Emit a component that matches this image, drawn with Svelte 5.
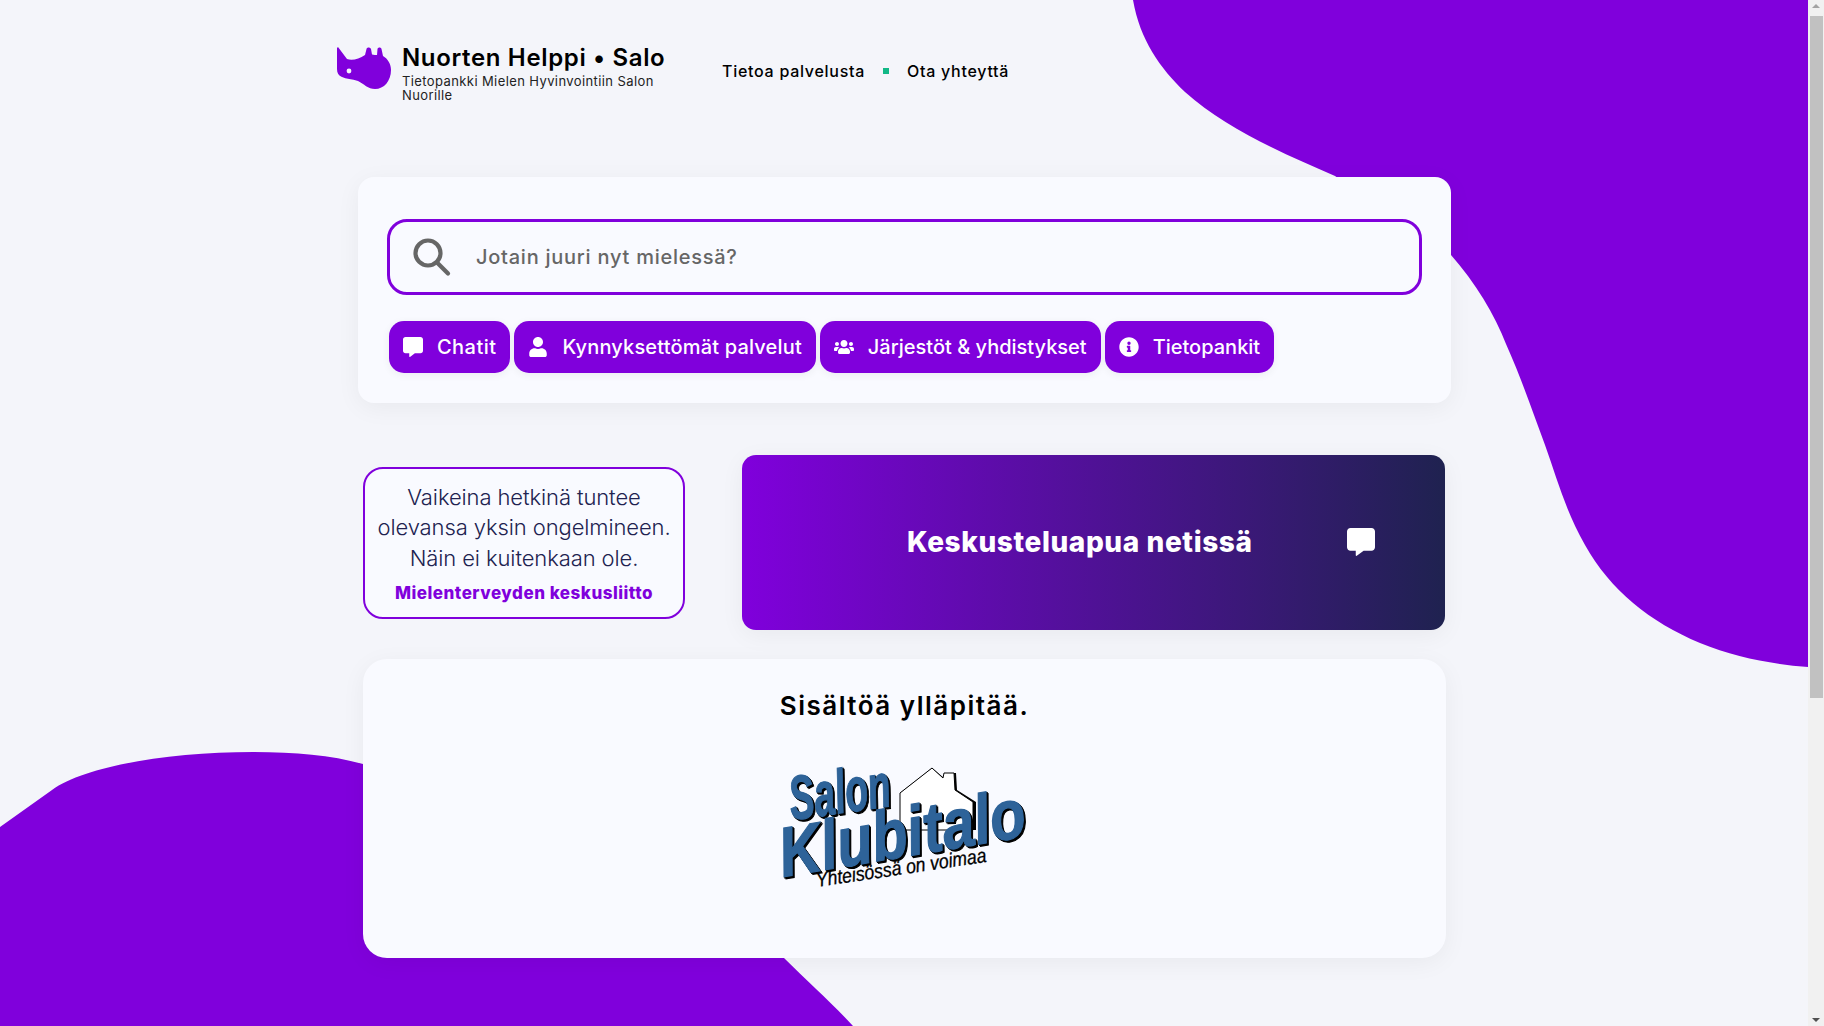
<script lang="ts">
	const quickLinks = [
		{ label: 'Chatit', icon: 'comment', tone: 'wide' },
		{ label: 'Kynnyksettömät palvelut', icon: 'user', tone: '' },
		{ label: 'Järjestöt & yhdistykset', icon: 'users', tone: 'tight' },
		{ label: 'Tietopankit', icon: 'info', tone: 'tight' }
	];

	const icons: Record<string, { box: string; d: string }> = {
		comment: {
			box: '0 0 512 512',
			d: 'M448 0H64C28.7 0 0 28.7 0 64v288c0 35.3 28.7 64 64 64h96v84c0 9.8 11.2 15.5 19.1 9.7L304 416h144c35.3 0 64-28.7 64-64V64c0-35.3-28.7-64-64-64z'
		},
		user: {
			box: '0 0 448 512',
			d: 'M224 256c70.7 0 128-57.3 128-128S294.7 0 224 0 96 57.3 96 128s57.3 128 128 128zm89.6 32h-16.7c-22.2 10.2-46.9 16-72.9 16s-50.6-5.8-72.9-16h-16.7C60.2 288 0 348.2 0 422.4V464c0 26.5 21.5 48 48 48h352c26.5 0 48-21.5 48-48v-41.6c0-74.2-60.2-134.4-134.4-134.4z'
		},
		users: {
			box: '0 0 640 512',
			d: 'M96 224c35.3 0 64-28.7 64-64s-28.7-64-64-64-64 28.7-64 64 28.7 64 64 64zm448 0c35.3 0 64-28.7 64-64s-28.7-64-64-64-64 28.7-64 64 28.7 64 64 64zm32 32h-64c-17.6 0-33.5 7.1-45.1 18.6 40.3 22.1 68.9 62 75.1 109.4h66c17.7 0 32-14.3 32-32v-32c0-35.3-28.7-64-64-64zm-256 0c61.9 0 112-50.1 112-112S381.9 32 320 32 208 82.1 208 144s50.1 112 112 112zm76.8 32h-8.3c-20.8 10-43.9 16-68.5 16s-47.6-6-68.5-16h-8.3C179.6 288 128 339.6 128 403.2V432c0 26.5 21.5 48 48 48h288c26.5 0 48-21.5 48-48v-28.8c0-63.6-51.6-115.2-115.2-115.2zm-223.7-13.4C161.5 263.1 145.6 256 128 256H64c-35.3 0-64 28.7-64 64v32c0 17.7 14.3 32 32 32h65.9c6.3-47.4 34.9-87.3 75.2-109.4z'
		},
		info: {
			box: '0 0 512 512',
			d: 'M256 8C119.043 8 8 119.083 8 256c0 136.997 111.043 248 248 248s248-111.003 248-248C504 119.083 392.957 8 256 8zm0 110c23.196 0 42 18.804 42 42s-18.804 42-42 42-42-18.804-42-42 18.804-42 42-42zm56 254c0 6.627-5.373 12-12 12h-88c-6.627 0-12-5.373-12-12v-24c0-6.627 5.373-12 12-12h12v-64h-12c-6.627 0-12-5.373-12-12v-24c0-6.627 5.373-12 12-12h64c6.627 0 12 5.373 12 12v100h12c6.627 0 12 5.373 12 12v24z'
		}
	};
</script>

<div class="page">
	<svg class="blobs" viewBox="0 0 1808 1026" aria-hidden="true">
		<path d="M1133 0C1140 40 1160 68 1185 92C1225 128 1280 152 1335 176L1451 255C1475 282 1495 315 1506 344C1520 375 1532 410 1545 445C1557 478 1565 510 1585 545C1610 590 1650 622 1700 643C1735 657 1770 664 1808 667V0Z" />
		<path d="M0 827L52 790C85 766 170 752 253 752C295 752 330 755 363 764L784 958C808 982 832 1003 853 1026H0Z" />
	</svg>

	<div class="container">
		<header class="site-header">
			<a class="brand" href="#top">
				<svg class="brand-logo" viewBox="336 46 56 44" aria-hidden="true">
					<path d="M338 47L347 59C352 61 359 59 365 55L366.500 49C367 47 370 47 371 49L372 54.500C374 55 375.500 55 377 55L377.500 49C378 47 381 47 381.500 49L383 56C388 59 391 64 391 70C391 81 384 89 375 89C368 89 364 84 358 81C352 79 346 79 342 77C338.500 75.500 337 73 337 69V48Z" />
					<circle cx="349" cy="71" r="2.400" fill="#f4f5fa" />
				</svg>
				<span class="brand-text">
					<span class="brand-title">Nuorten Helppi • Salo</span>
					<span class="brand-sub">Tietopankki Mielen Hyvinvointiin Salon Nuorille</span>
				</span>
			</a>
			<nav class="nav">
				<a href="#top">Tietoa palvelusta</a>
				<span class="nav-dot"></span>
				<a href="#top">Ota yhteyttä</a>
			</nav>
		</header>

		<section class="search-card">
			<label class="search-box">
				<svg class="search-icon" viewBox="0 0 40 40" aria-hidden="true">
					<circle cx="17" cy="16" r="12.500" />
					<path d="M26 25.500L37 36.500" />
				</svg>
				<input type="text" placeholder="Jotain juuri nyt mielessä?" />
			</label>
			<div class="quick-links">
				{#each quickLinks as link}
					<a class="quick-link {link.tone}" href="#top">
						<span class="quick-icon">
							<svg viewBox={icons[link.icon].box} aria-hidden="true"><path d={icons[link.icon].d} /></svg>
						</span>
						{link.label}
					</a>
				{/each}
			</div>
		</section>

		<section class="middle-row">
			<blockquote class="quote">
				<p>Vaikeina hetkinä tuntee olevansa yksin ongelmineen. Näin ei kuitenkaan ole.</p>
				<cite>Mielenterveyden keskusliitto</cite>
			</blockquote>
			<a class="chat-banner" href="#top">
				<span class="chat-title">Keskusteluapua netissä</span>
				<svg class="chat-icon" viewBox={icons.comment.box} aria-hidden="true"><path d={icons.comment.d} /></svg>
			</a>
		</section>

		<section class="maintainer">
			<h2>Sisältöä ylläpitää.</h2>
			<svg class="klubitalo" viewBox="-5 0 300 220" role="img" aria-label="Salon Klubitalo">
				<polygon class="house-shadow" points="140,113 172,88 184,98 186,93 196,93 197,110 216,122 216,150 140,150" />
				<polygon class="house" points="140,113 172,88 183,98 184,93 194,93 195,110 213,122 213,150 140,150" />
				<g class="klubi-letters">
					<text class="salon" transform="translate(32 140) rotate(-8)" textLength="102" lengthAdjust="spacingAndGlyphs">Salon</text>
					<text class="klubi" transform="translate(23 197) rotate(-9.500)" textLength="249" lengthAdjust="spacingAndGlyphs">Klubitalo</text>
				</g>
				<text class="motto" transform="translate(57 207) rotate(-8.400)" textLength="172" lengthAdjust="spacingAndGlyphs">Yhteisössä on voimaa</text>
			</svg>
		</section>
	</div>

	<div class="scrollbar" aria-hidden="true">
		<span class="arrow up"></span>
		<span class="thumb"></span>
		<span class="arrow down"></span>
	</div>
</div>

<style>
	:global(body) {
		margin: 0;
		background: #f4f5fa;
	}

	.page {
		position: relative;
		height: 1026px;
		overflow: hidden;
		font-family: Inter, "Open Sans", sans-serif;
		color: #000;
	}

	a {
		text-decoration: none;
		color: inherit;
	}

	.blobs {
		position: absolute;
		top: 0;
		left: 0;
		width: 1808px;
		height: 1026px;
		fill: #8000dc;
	}

	.container {
		position: relative;
		width: 1140px;
		margin-left: 334px;
	}

	.site-header {
		height: 177px;
		display: flex;
		align-items: flex-start;
		padding: 43px 0 0 3px;
		box-sizing: border-box;
	}

	.brand {
		display: flex;
		width: 340px;
		gap: 11px;
	}

	.brand-logo {
		width: 56px;
		height: 44px;
		margin: 3px 0 0 -1px;
		fill: #8000dc;
		flex: none;
	}

	.brand-text {
		display: flex;
		flex-direction: column;
		margin-left: -1px;
		width: 270px;
		padding-top: 2px;
	}

	.brand-title {
		font-size: 24px;
		line-height: 26px;
		font-weight: 600;
		letter-spacing: 0.65px;
		white-space: nowrap;
	}

	.brand-sub {
		font-size: 13px;
		line-height: 14px;
		margin-top: 3px;
		letter-spacing: 0.4px;
		color: #222;
	}

	.nav {
		display: flex;
		align-items: center;
		gap: 18px;
		margin: 17px 0 0 45px;
		font-size: 16px;
		line-height: 22px;
		font-weight: 500;
		letter-spacing: 0.72px;
	}

	.nav-dot {
		width: 6px;
		height: 6px;
		background: #12b886;
	}

	.search-card {
		width: 1093px;
		height: 226px;
		margin-left: 24px;
		padding: 42px 29px 0;
		box-sizing: border-box;
		background: #f9faff;
		border-radius: 16px;
		box-shadow: 0 5px 25px rgba(0, 0, 0, 0.05);
	}

	.search-box {
		display: flex;
		align-items: center;
		height: 76px;
		box-sizing: border-box;
		border: 3px solid #8000dc;
		border-radius: 20px;
		padding-left: 21px;
		gap: 25px;
	}

	.search-icon {
		width: 40px;
		height: 40px;
		flex: none;
		fill: none;
		stroke: #666;
		stroke-width: 4.200;
		stroke-linecap: round;
	}

	.search-box input {
		flex: 1;
		border: none;
		outline: none;
		background: none;
		padding: 0;
		font-family: inherit;
		font-size: 20px;
		font-weight: 500;
		letter-spacing: 0.75px;
		color: #666;
	}

	.search-box input::placeholder {
		color: #666;
		opacity: 1;
	}

	.quick-links {
		display: flex;
		gap: 4px;
		margin: 26px 0 0 2px;
	}

	.quick-link {
		display: flex;
		align-items: center;
		height: 52px;
		padding: 0 14px;
		border-radius: 15px;
		background: #8000dc;
		color: #fff;
		font-size: 20px;
		font-weight: 500;
		letter-spacing: 0.17px;
		box-shadow: 0 2px 8px rgba(0, 0, 0, 0.06);
	}

	.quick-link.wide {
		letter-spacing: 0.45px;
	}

	.quick-link.tight {
		letter-spacing: 0;
	}

	.quick-icon {
		display: flex;
		justify-content: center;
		width: 20px;
		margin-right: 14px;
	}

	.quick-icon svg {
		width: 20px;
		height: 20px;
		fill: #fff;
	}

	.middle-row {
		display: flex;
		align-items: center;
		margin: 52px 0 0 29px;
	}

	.quote {
		width: 322px;
		height: 152px;
		margin: 0;
		padding: 13px 4px 0;
		box-sizing: border-box;
		background: #f9faff;
		border: 2px solid #8000dc;
		border-radius: 20px;
		text-align: center;
	}

	.quote p {
		margin: 0;
		font-size: 22px;
		line-height: 30.500px;
		font-weight: 300;
		letter-spacing: -0.1px;
		color: #212250;
	}

	.quote cite {
		display: block;
		margin-top: 8px;
		font-size: 17px;
		line-height: 24px;
		font-style: normal;
		font-weight: 800;
		letter-spacing: 0.5px;
		color: #8000dc;
	}

	.chat-banner {
		display: flex;
		align-items: center;
		justify-content: space-between;
		width: 703px;
		height: 175px;
		margin-left: 57px;
		padding: 0 70px 2px 165px;
		box-sizing: border-box;
		border-radius: 14px;
		background: linear-gradient(to right, #8000dc, #1f2250);
		box-shadow: 0 5px 25px rgba(0, 0, 0, 0.05);
		color: #fff;
	}

	.chat-title {
		font-size: 28px;
		font-weight: 800;
		letter-spacing: 0.6px;
	}

	.chat-icon {
		width: 28px;
		height: 28px;
		fill: #fff;
	}

	.maintainer {
		width: 1083px;
		height: 299px;
		margin: 29px 0 0 29px;
		padding-top: 29px;
		box-sizing: border-box;
		background: #f9faff;
		border-radius: 24px;
		box-shadow: 0 5px 25px rgba(0, 0, 0, 0.05);
		text-align: center;
	}

	.maintainer h2 {
		margin: 0;
		font-size: 26px;
		line-height: 36px;
		font-weight: 600;
		letter-spacing: 1.5px;
	}

	.klubitalo {
		display: block;
		width: 300px;
		height: 220px;
		margin: -44px auto 0;
		overflow: visible;
		font-family: "Liberation Sans", Arial, sans-serif;
		font-weight: 700;
		font-style: italic;
	}

	.house {
		fill: #fff;
		stroke: #000;
		stroke-width: 1;
	}

	.house-shadow {
		fill: #000;
	}

	.klubi-letters {
		fill: #2e6399;
		stroke: #2e6399;
		stroke-width: 1.200;
		filter: drop-shadow(1.500px 1.500px 0 #000) drop-shadow(1.500px 1.500px 0 #000);
	}

	.salon {
		font-size: 62px;
	}

	.klubi {
		font-size: 70px;
	}

	.motto {
		font-size: 20px;
		font-weight: 400;
		stroke: #000;
		stroke-width: 0.300;
	}

	.scrollbar {
		position: absolute;
		top: 0;
		right: 0;
		width: 16px;
		height: 1026px;
		background: #f1f1f1;
		display: flex;
		flex-direction: column;
		align-items: center;
	}

	.thumb {
		width: 13px;
		height: 682px;
		margin-top: 8px;
		background: #c1c1c1;
	}

	.arrow {
		width: 0;
		height: 0;
		border-left: 4px solid transparent;
		border-right: 4px solid transparent;
	}

	.arrow.up {
		margin-top: 4px;
		border-bottom: 4px solid #a3a3a3;
	}

	.arrow.down {
		margin-top: auto;
		margin-bottom: 4px;
		border-top: 4px solid #505050;
	}
</style>
